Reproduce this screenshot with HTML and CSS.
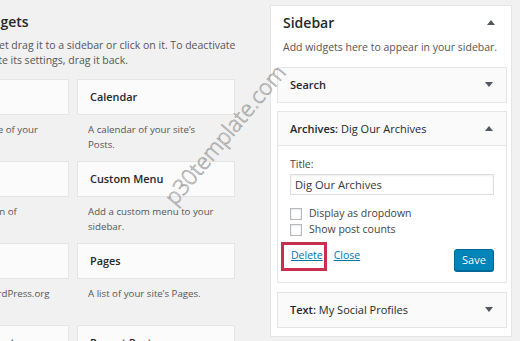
FILE: index.html
```html
<!DOCTYPE html>
<html lang="en">
<head>
<meta charset="utf-8">
<title>Widgets</title>
<link rel="stylesheet" href="styles.css">
</head>
<body>
<div class="page">
  <section class="available">
    <h2 class="area-title">Available Widgets</h2>
    <p class="area-desc">To activate a widget drag it to a sidebar or click on it. To deactivate<br>a widget and delete its settings, drag it back.</p>
    <div class="widget-grid">
      <div class="item"><div class="item-top">Archives</div><p class="item-desc">A monthly archive of your site’s Posts.</p></div>
      <div class="item"><div class="item-top">Calendar</div><p class="item-desc">A calendar of your site’s Posts.</p></div>
      <div class="item"><div class="item-top">Categories</div><p class="item-desc">A list or dropdown of categories.</p></div>
      <div class="item"><div class="item-top">Custom Menu</div><p class="item-desc">Add a custom menu to your sidebar.</p></div>
      <div class="item"><div class="item-top">Meta</div><p class="item-desc">Login, RSS, &amp; WordPress.org links.</p></div>
      <div class="item"><div class="item-top">Pages</div><p class="item-desc">A list of your site’s Pages.</p></div>
      <div class="item"><div class="item-top">Recent Comments</div><p class="item-desc">Your site’s most recent comments.</p></div>
      <div class="item"><div class="item-top">Recent Posts</div><p class="item-desc">Your site’s most recent Posts.</p></div>
    </div>
  </section>

  <section class="sidebar">
    <div class="sidebar-head">
      <h2 class="sidebar-title">Sidebar</h2>
      <svg class="arrow" width="8" height="5" viewBox="0 0 8 5"><polygon points="0,5 4,0 8,5"/></svg>
    </div>
    <p class="sidebar-desc">Add widgets here to appear in your sidebar.</p>

    <div class="widget first">
      <div class="widget-top">
        <span class="widget-title">Search</span>
        <svg class="arrow" width="8" height="5" viewBox="0 0 8 5"><polygon points="0,0 8,0 4,5"/></svg>
      </div>
    </div>

    <div class="widget open">
      <div class="widget-top">
        <span class="widget-title">Archives:<span class="in-title"> Dig Our Archives</span></span>
        <svg class="arrow" width="8" height="5" viewBox="0 0 8 5"><polygon points="0,5 4,0 8,5"/></svg>
      </div>
      <div class="widget-body">
        <label class="field-label" for="arch-title">Title:</label>
        <input class="field-input" id="arch-title" type="text" value="Dig Our Archives">
        <div class="checks">
          <label class="check-row"><input class="check" type="checkbox"><span>Display as dropdown</span></label>
          <label class="check-row"><input class="check" type="checkbox"><span>Show post counts</span></label>
        </div>
        <div class="actions">
          <div class="links">
            <a class="link delete" href="#">Delete</a>
            <a class="link" href="#">Close</a>
          </div>
          <button class="save" type="button">Save</button>
        </div>
      </div>
    </div>

    <div class="widget">
      <div class="widget-top">
        <span class="widget-title">Text:<span class="in-title"> My Social Profiles</span></span>
        <svg class="arrow" width="8" height="5" viewBox="0 0 8 5"><polygon points="0,0 8,0 4,5"/></svg>
      </div>
    </div>
  </section>
</div>
<span class="watermark">p30template.com</span>
</body>
</html>
```

FILE: styles.css
```css
* { box-sizing: border-box; }

html, body {
  margin: 0;
  padding: 0;
}

body {
  position: relative;
  width: 520px;
  height: 341px;
  overflow: hidden;
  background: #f1f1f1;
  font-family: "Open Sans", "Noto Sans", sans-serif;
  color: #444;
}

.page {
  display: flex;
  align-items: flex-start;
  padding-top: 5px;
}

/* ---------- available widgets ---------- */
.available {
  flex: none;
  width: 324px;
  margin-left: -89px;
}

.area-title {
  margin: 6.5px 0 0 -1.5px;
  font-size: 14px;
  font-weight: 600;
  line-height: 20px;
  color: #23282d;
}

.area-desc {
  margin: 6px 0 0 1px;
  font-size: 10.5px;
  line-height: 15px;
  color: #555;
  white-space: nowrap;
}

.widget-grid {
  display: grid;
  grid-template-columns: 158px 158px;
  column-gap: 8px;
  margin-top: 11px;
}

.item-top {
  height: 36px;
  padding: 0 12px;
  background: #fbfbfb;
  border: 1px solid #e5e5e5;
  font-size: 10.9px;
  font-weight: 600;
  line-height: 34px;
  color: #23282d;
}

.item-desc {
  height: 46px;
  margin: 0;
  padding: 7px 15px 0 11px;
  font-size: 9.7px;
  line-height: 15px;
  color: #555;
}

/* ---------- sidebar panel ---------- */
.sidebar {
  flex: none;
  width: 242px;
  margin-left: 35px;
  padding: 0 4px 8px 6px;
  background: #fff;
  border: 1px solid #e5e5e5;
}

.sidebar-head {
  display: flex;
  align-items: center;
  justify-content: space-between;
  padding: 6.5px 12px 0 6px;
}

.sidebar-title {
  margin: 0;
  font-size: 14px;
  font-weight: 600;
  line-height: 20px;
  color: #23282d;
}

.arrow { display: block; fill: #50575e; }

.sidebar-desc {
  margin: 7px 0 0 6px;
  font-size: 10.5px;
  line-height: 15px;
  color: #555;
}

.widget {
  margin-top: 9px;
  border: 1px solid #e5e5e5;
  background: #fff;
}

.widget.first { margin-top: 12px; }

.widget-top {
  display: flex;
  align-items: center;
  justify-content: space-between;
  height: 34px;
  padding: 0 13px 0 12px;
  background: #fafafa;
  font-size: 11px;
  font-weight: 600;
  color: #23282d;
}

.in-title { font-weight: 400; }

.widget.open { margin-top: 8px; }
.widget.open .widget-top { border-bottom: 1px solid #e5e5e5; height: 34px; }

.widget-body {
  padding: 11px 12px 11px;
  font-size: 10.5px;
  color: #444;
}

.field-label {
  display: block;
  line-height: 15px;
}

.field-input {
  display: block;
  width: 100%;
  height: 21px;
  margin-top: 2px;
  padding: 0 4px;
  border: 1px solid #ddd;
  box-shadow: inset 0 1px 2px rgba(0, 0, 0, .07);
  font-family: inherit;
  font-size: 11.2px;
  color: #32373c;
  background: #fff;
}

.checks { margin-top: 11px; }

.check-row {
  display: flex;
  align-items: center;
  gap: 7px;
  height: 16px;
  line-height: 15px;
}

.check {
  appearance: none;
  -webkit-appearance: none;
  flex: none;
  width: 12px;
  height: 12px;
  margin: 0;
  border: 1px solid #b4b9be;
  background: #fff;
  box-shadow: inset 0 1px 2px rgba(0, 0, 0, .1);
}

.actions {
  display: flex;
  align-items: flex-start;
  justify-content: space-between;
  margin-top: 11px;
}

.links {
  display: flex;
  gap: 11px;
  padding-left: 1px;
  line-height: 13px;
}

.link {
  position: relative;
  color: #0073aa;
  text-decoration: underline;
  font-size: 10.5px;
}

.delete::after {
  content: "";
  position: absolute;
  left: -10px;
  right: -4px;
  top: -7px;
  bottom: -9px;
  border: 3px solid #c9304f;
}

.save {
  width: 40px;
  height: 22px;
  padding: 0;
  border: 1px solid #006799;
  border-radius: 3px;
  background: #0085ba;
  box-shadow: 0 1px 0 #006799;
  color: #fff;
  font-family: inherit;
  font-size: 11px;
  line-height: 20px;
  text-shadow: 0 -1px 1px #006799;
}

/* ---------- watermark ---------- */
.watermark {
  position: absolute;
  left: 224px;
  top: 134px;
  transform: translate(-50%, -50%) rotate(-50deg);
  font-family: "Open Sans", sans-serif;
  font-size: 22px;
  font-weight: 300;
  color: transparent;
  -webkit-text-stroke: 0.6px #999;
  white-space: nowrap;
  pointer-events: none;
}
```
